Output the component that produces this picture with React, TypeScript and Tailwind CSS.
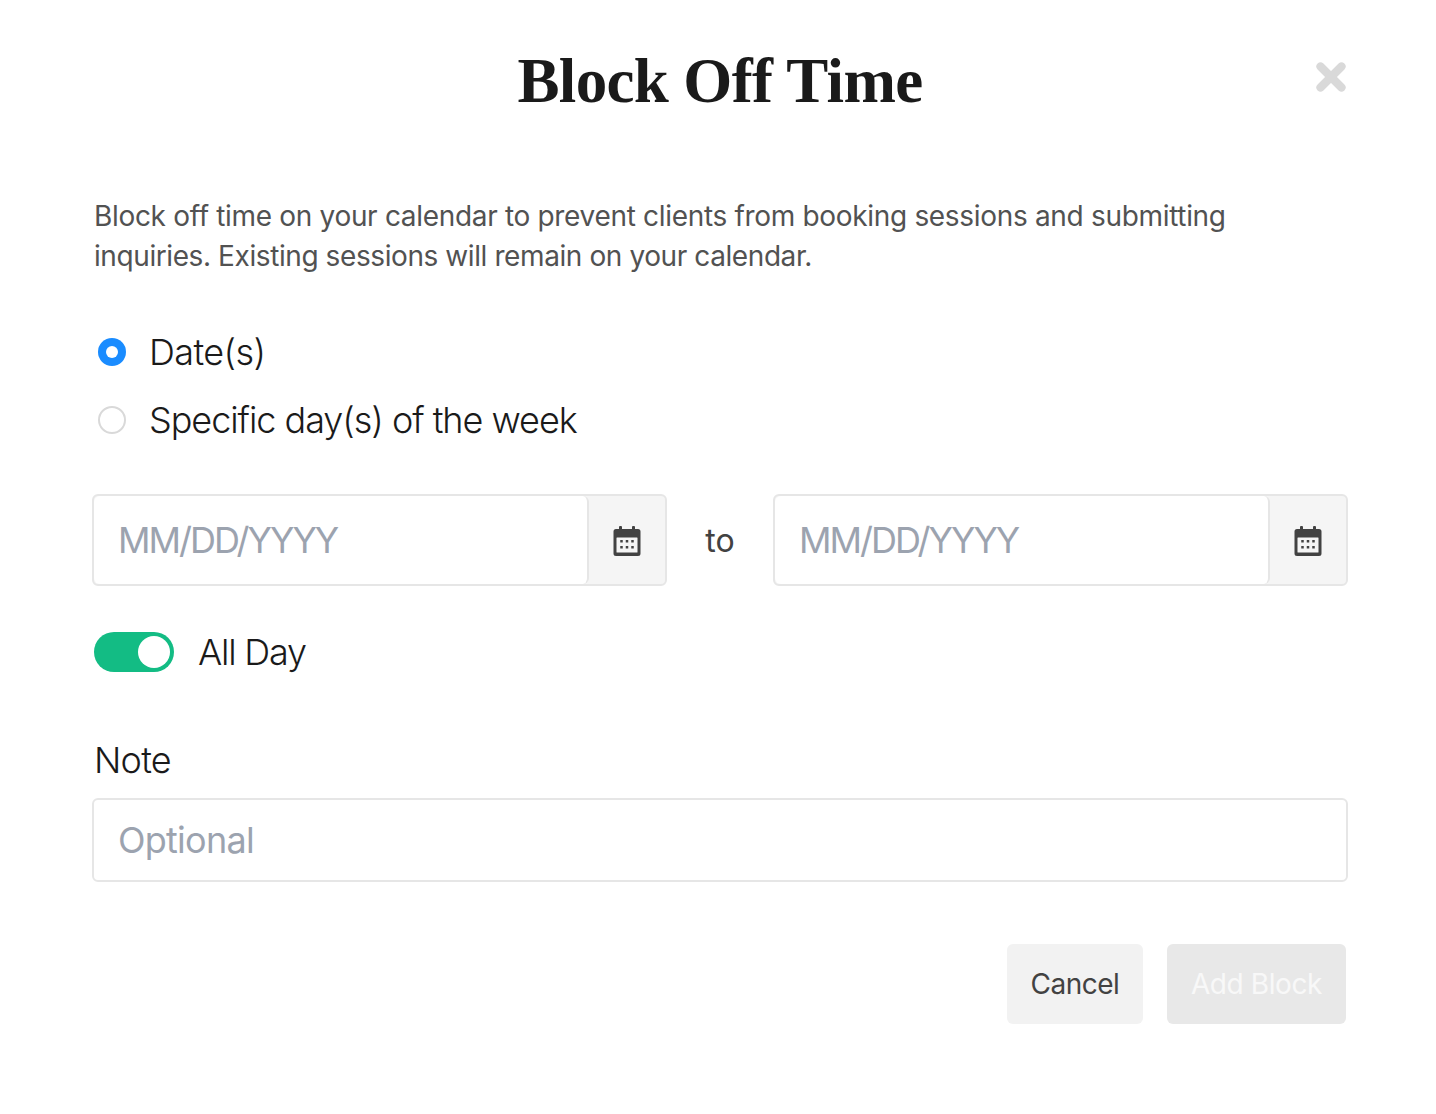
import { X } from 'lucide-react';

function CalendarIcon() {
  return (
    <svg width="28" height="30" viewBox="0 0 28 30" className="mt-[2px] text-[#424242]">
      <rect x="6" y="0" width="3" height="6" rx="1" fill="currentColor" />
      <rect x="19" y="0" width="3" height="6" rx="1" fill="currentColor" />
      <path fill="currentColor" d="M3 3h22a2.5 2.5 0 0 1 2.5 2.5v22a2.5 2.5 0 0 1-2.5 2.5H3a2.5 2.5 0 0 1-2.5-2.5v-22A2.5 2.5 0 0 1 3 3Z" />
      <rect x="3.5" y="11.5" width="21" height="15" rx="0.5" fill="#f5f5f5" />
      <g fill="currentColor">
        <rect x="7.25" y="14" width="2.5" height="2.5" />
        <rect x="12.75" y="14" width="2.5" height="2.5" />
        <rect x="18.25" y="14" width="2.5" height="2.5" />
        <rect x="7.25" y="20" width="2.5" height="2.5" />
        <rect x="12.75" y="20" width="2.5" height="2.5" />
        <rect x="18.25" y="20" width="2.5" height="2.5" />
      </g>
    </svg>
  );
}

function DateField() {
  return (
    <div className="flex h-[92px] w-[575px] rounded-md border-2 border-[#e6e6e6] bg-[#f5f5f5]">
      <div className="flex flex-1 items-center rounded-md border-r-2 border-[#e6e6e6] bg-white pl-[24px] text-[36px] tracking-[-2px] text-[#9ca3af]">
        MM/DD/YYYY
      </div>
      <div className="flex w-[76px] items-center justify-center">
        <CalendarIcon />
      </div>
    </div>
  );
}

export default function App() {
  return (
    <div className="h-[1114px] w-[1436px] bg-white font-['Inter',sans-serif] text-[#1a1a1a] overflow-hidden">
      <div className="relative pl-[92px] pr-[88px] pt-[40px]">
        <h1 className="text-center font-['Liberation_Serif',serif] text-[63px] font-bold leading-[82px] tracking-[-0.65px] text-[#1a1a1a]">
          Block Off Time
        </h1>
        <button className="absolute right-[84px] top-[56px] text-[#d9d9d9]">
          <X size={42} strokeWidth={4.7} />
        </button>

        <p className="mt-[74px] pl-[2px] text-[28px] leading-[40px] tracking-[-0.32px] text-[#525252]">
          Block off time on your calendar to prevent clients from booking sessions and submitting
          <br />
          <span className="tracking-[-0.41px]">inquiries. Existing sessions will remain on your calendar.</span>
        </p>

        <div className="mt-[54px] flex flex-col gap-[24px] pl-[6px]">
          <label className="flex h-[44px] items-center gap-[23px] text-[36px] font-light tracking-[-0.6px]">
            <span className="flex h-[28px] w-[28px] items-center justify-center rounded-full bg-[#1a8cff]">
              <span className="h-[12px] w-[12px] rounded-full bg-white" />
            </span>
            Date(s)
          </label>
          <label className="flex h-[44px] items-center gap-[23px] text-[36px] font-light tracking-[-1.04px]">
            <span className="h-[28px] w-[28px] rounded-full border-2 border-[#d9d9d9] bg-white" />
            Specific day(s) of the week
          </label>
        </div>

        <div className="mt-[52px] flex items-center justify-between">
          <DateField />
          <span className="mt-[2px] text-[32px] text-[#424242]">to</span>
          <DateField />
        </div>

        <div className="mt-[39px] flex items-center gap-[24px] pl-[2px]">
          <span className="flex h-[40px] w-[80px] items-center justify-end rounded-full bg-[#13bc84] pr-[4px]">
            <span className="h-[32px] w-[32px] rounded-full bg-white" />
          </span>
          <span className="text-[36px] font-light tracking-[-1.2px]">All Day</span>
        </div>

        <label className="mt-[55px] block pl-[2px] text-[36px] font-light leading-[52px] tracking-[-0.75px]">Note</label>
        <div className="mt-[12px] flex h-[84px] items-center rounded-md border-2 border-[#e6e6e6] pl-[24px] text-[36px] tracking-[-0.75px] text-[#9ca3af]">
          Optional
        </div>

        <div className="mt-[62px] flex justify-end gap-[24px] pr-[2px]">
          <button className="h-[80px] w-[136px] rounded-md bg-[#f2f2f2] text-[28px] tracking-[-0.5px] text-[#424242]">Cancel</button>
          <button className="h-[80px] w-[179px] rounded-md bg-[#e8e8e8] text-[28px] tracking-[-0.4px] text-[#f8f8f8]">Add Block</button>
        </div>
      </div>
    </div>
  );
}
